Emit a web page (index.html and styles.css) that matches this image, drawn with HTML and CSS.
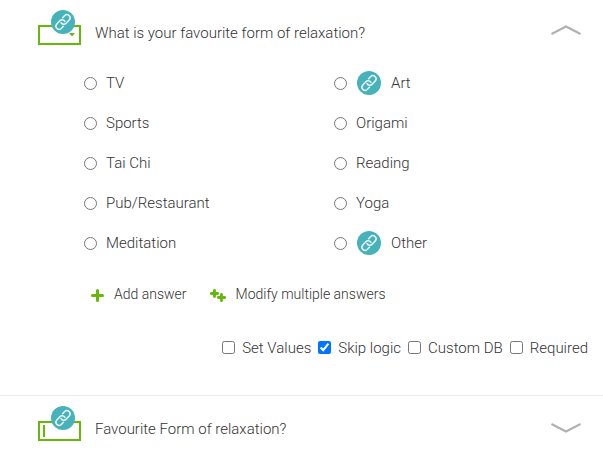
FILE: index.html
```html
<!DOCTYPE html>
<html lang="en">
<head>
    <meta charset="UTF-8">
    <meta name="viewport" content="width=device-width, initial-scale=1.0">
    <title>Survey Editor</title>
    <link rel="stylesheet" href="styles.css">
</head>
<body>
    <!-- Shared link badge -->
    <svg class="symbols">
        <symbol id="link" viewBox="0 0 24 24">
            <circle cx="12" cy="12" r="12" fill="#48b2ba"/>
            <g transform="rotate(-47 12 12)" fill="none" stroke="#e8f6f7" stroke-width="1.5" stroke-linecap="round">
                <path d="M9.2 15.2H6.4a3.2 3.2 0 0 1 0-6.4h4.4a3.2 3.2 0 0 1 3 4.2"/>
                <path d="M14.8 8.8h2.8a3.2 3.2 0 0 1 0 6.4h-4.4a3.2 3.2 0 0 1-3-4.2"/>
            </g>
        </symbol>
    </svg>

    <!-- Open question -->
    <section class="question">
        <header class="question-header">
            <div class="type-icon dropdown">
                <svg class="badge"><use href="#link"/></svg>
                <svg class="arrow" viewBox="0 0 6 4"><path d="M0 0h6L3 3.5z" fill="#64b90a"/></svg>
            </div>
            <h2 class="title">What is your favourite form of relaxation?</h2>
            <svg class="chevron" viewBox="0 0 30 10"><path d="M.5 9 15 1.5 29.5 9"/></svg>
        </header>

        <div class="answers">
            <label class="answer"><input type="radio" name="answer">TV</label>
            <label class="answer"><input type="radio" name="answer"><svg class="badge"><use href="#link"/></svg>Art</label>
            <label class="answer"><input type="radio" name="answer">Sports</label>
            <label class="answer"><input type="radio" name="answer">Origami</label>
            <label class="answer"><input type="radio" name="answer">Tai Chi</label>
            <label class="answer"><input type="radio" name="answer">Reading</label>
            <label class="answer"><input type="radio" name="answer">Pub/Restaurant</label>
            <label class="answer"><input type="radio" name="answer">Yoga</label>
            <label class="answer"><input type="radio" name="answer">Meditation</label>
            <label class="answer"><input type="radio" name="answer"><svg class="badge"><use href="#link"/></svg>Other</label>
        </div>

        <div class="actions">
            <a class="action">
                <svg class="plus" viewBox="0 0 13 13"><path d="M6.5 1.5v10M1.5 6.5h10" stroke-width="3"/></svg>
                Add answer
            </a>
            <a class="action">
                <svg class="plus-multi" viewBox="0 0 16 13"><path d="M4.5 1.4v6.2M1.4 4.5h6.2M11.5 5.4v6.2M8.4 8.5h6.2" stroke-width="2.9"/></svg>
                Modify multiple answers
            </a>
        </div>

        <div class="options">
            <label class="option"><input type="checkbox">Set Values</label>
            <label class="option"><input type="checkbox" checked>Skip logic</label>
            <label class="option"><input type="checkbox">Custom DB</label>
            <label class="option"><input type="checkbox">Required</label>
        </div>
    </section>

    <!-- Collapsed question -->
    <section class="question">
        <header class="question-header">
            <div class="type-icon text">
                <svg class="badge"><use href="#link"/></svg>
            </div>
            <h2 class="title">Favourite Form of relaxation?</h2>
            <svg class="chevron" viewBox="0 0 30 10"><path d="M.5 1 15 8.5 29.5 1"/></svg>
        </header>
    </section>
</body>
</html>
```
FILE: styles.css
```css
body {
    margin: 0;
    background-color: #fff;
    color: #333;
    font-family: Roboto, "Liberation Sans", sans-serif;
    font-size: 15px;
    font-weight: 300;
    line-height: 20px;
    overflow: hidden;
}
.symbols {
    display: none;
}
.question + .question {
    border-top: 1px solid #eaeaea;
}
.question-header {
    display: flex;
    align-items: center;
    height: 63px;
    padding: 0 22px 0 38px;
}
.question + .question .question-header {
    height: 59px;
    padding-top: 3px;
    margin-top: -1px;
}
.question + .question .chevron {
    margin-bottom: 0;
}
.type-icon {
    position: relative;
    box-sizing: border-box;
    width: 43px;
    height: 20px;
    margin: 7px 14px 0 0;
    border: 2px solid #64b90a;
}
.badge {
    display: block;
    flex: none;
    width: 24px;
    height: 24px;
}
.type-icon .badge {
    position: absolute;
    left: 11px;
    top: -17px;
}
.arrow {
    position: absolute;
    right: 4px;
    top: 6px;
    width: 6px;
    height: 4px;
}
.text::before {
    content: "";
    display: block;
    width: 2px;
    height: 12px;
    margin: 2px 0 0 3px;
    background-color: #64b90a;
}
.title {
    flex: 1;
    margin: 3px 0 0;
    font-size: 15px;
    font-weight: 300;
}
.chevron {
    width: 30px;
    height: 10px;
    margin-bottom: 4px;
    fill: none;
    stroke: #b0b0b0;
    stroke-width: 2;
}
.answers {
    display: grid;
    grid-template-columns: 250px 1fr;
    grid-auto-rows: 40px;
    padding-left: 84px;
}
.answer {
    display: flex;
    align-items: center;
}
.answer input {
    width: 13px;
    height: 13px;
    margin: 1px 9px 0 0;
}
.answer .badge {
    margin: 0 10px 0 1px;
}
.actions {
    display: flex;
    gap: 23px;
    padding: 21px 0 0 91px;
}
.action {
    display: flex;
    align-items: center;
    font-size: 14px;
}
.action svg {
    fill: none;
    stroke: #64b90a;
    stroke-linecap: round;
}
.plus {
    width: 13px;
    height: 13px;
    margin: 3px 10px 0 0;
}
.plus-multi {
    width: 16px;
    height: 13px;
    margin: 3px 10px 0 0;
}
.options {
    display: flex;
    justify-content: flex-end;
    gap: 7px;
    padding: 34px 15px 37px 0;
}
.option {
    display: flex;
    align-items: center;
}
.option input {
    width: 13px;
    height: 13px;
    margin: 0 7px 2px 0;
}
```
